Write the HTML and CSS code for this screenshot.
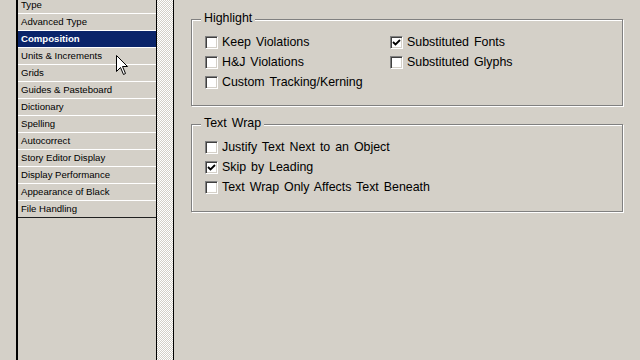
FILE: index.html
```html
<!DOCTYPE html>
<html lang="en">

<head>
    <meta charset="UTF-8">
    <title>Preferences</title>
    <link rel="stylesheet" href="styles.css">
</head>

<body>
    <div class="gutter"></div>
    <ul class="list">
        <li>Type</li>
        <li>Advanced Type</li>
        <li class="selected">Composition</li>
        <li>Units &amp; Increments</li>
        <li>Grids</li>
        <li>Guides &amp; Pasteboard</li>
        <li>Dictionary</li>
        <li>Spelling</li>
        <li>Autocorrect</li>
        <li>Story Editor Display</li>
        <li>Display Performance</li>
        <li>Appearance of Black</li>
        <li class="last">File Handling</li>
    </ul>
    <div class="scroll"></div>

    <div class="panel">
        <div class="group highlight">
            <span class="legend">Highlight</span>
            <div class="grid">
                <label class="check"><span class="box"></span>Keep Violations</label>
                <label class="check"><span class="box checked"><svg viewBox="0 0 11 11"><path d="M2 5 L4.5 7.5 L9 3" /></svg></span>Substituted Fonts</label>
                <label class="check"><span class="box"></span>H&amp;J Violations</label>
                <label class="check"><span class="box"></span>Substituted Glyphs</label>
                <label class="check"><span class="box"></span>Custom Tracking/Kerning</label>
            </div>
        </div>

        <div class="group wrap">
            <span class="legend">Text Wrap</span>
            <label class="check"><span class="box"></span>Justify Text Next to an Object</label>
            <label class="check"><span class="box checked"><svg viewBox="0 0 11 11"><path d="M2 5 L4.5 7.5 L9 3" /></svg></span>Skip by Leading</label>
            <label class="check"><span class="box"></span>Text Wrap Only Affects Text Beneath</label>
        </div>
    </div>

    <svg class="cursor" width="13" height="21" viewBox="0 0 13 21">
        <path d="M0.5 0.5 L0.5 16.5 L4.5 12.5 L7.5 19.5 L9.5 18.5 L6.5 11.5 L11.5 11.5 Z" />
    </svg>
</body>

</html>
```

FILE: styles.css
```css
body {
    margin: 0;
    height: 360px;
    overflow: hidden;
    display: flex;
    align-items: stretch;
    background: #d4d0c8;
    font-family: "Liberation Sans", Arial, sans-serif;
    color: #000;
}

.gutter {
    width: 16px;
    flex: none;
}

.list {
    width: 138px;
    flex: none;
    margin: 0;
    padding: 0;
    list-style: none;
    border-left: 2px solid #000;
    border-right: 1px solid #000;
}

.list li {
    height: 16px;
    line-height: 16px;
    padding-left: 3px;
    font-size: 9.6px;
    border-bottom: 1px solid #fff;
    white-space: nowrap;
}

.list li:first-child {
    margin-top: -3px;
}

.list li.selected {
    background: #0a246a;
    color: #fff;
    font-weight: bold;
}

.list li.last {
    border-bottom-color: #202020;
}

.scroll {
    width: 16px;
    flex: none;
    border-right: 1px solid #000;
    background-color: #d4d0c8;
    background-image: repeating-conic-gradient(#fff 0 25%, #d4d0c8 0 50%);
    background-size: 2px 2px;
}

.panel {
    padding: 19px 0 0 17px;
    font-size: 12.4px;
    word-spacing: 1.5px;
}

.group {
    position: relative;
    box-sizing: border-box;
    width: 432px;
    height: 87px;
    padding: 12px 0 0 13px;
    border: 1px solid #808080;
    box-shadow: inset 1px 1px 0 #fff, 1px 1px 0 #fff;
}

.group.wrap {
    margin-top: 18px;
    height: 88px;
}

.legend {
    position: absolute;
    top: -9px;
    left: 9px;
    padding: 0 3px;
    background: #d4d0c8;
    line-height: 15px;
}

.grid {
    display: grid;
    grid-template-columns: 185px auto;
}

.check {
    display: flex;
    align-items: center;
    height: 20px;
    white-space: nowrap;
}

.box {
    box-sizing: border-box;
    width: 13px;
    height: 13px;
    margin-right: 4px;
    background: #fff;
    border: 1px solid;
    border-color: #808080 #fff #fff #808080;
    box-shadow: inset 1px 1px 0 #404040, inset -1px -1px 0 #d4d0c8;
    display: flex;
}

.box svg {
    width: 11px;
    height: 11px;
}

.box path {
    fill: none;
    stroke: #000;
    stroke-width: 1.8;
}

.cursor {
    position: absolute;
    left: 116px;
    top: 55px;
}

.cursor path {
    fill: #fff;
    stroke: #000;
    stroke-width: 1;
}
```
